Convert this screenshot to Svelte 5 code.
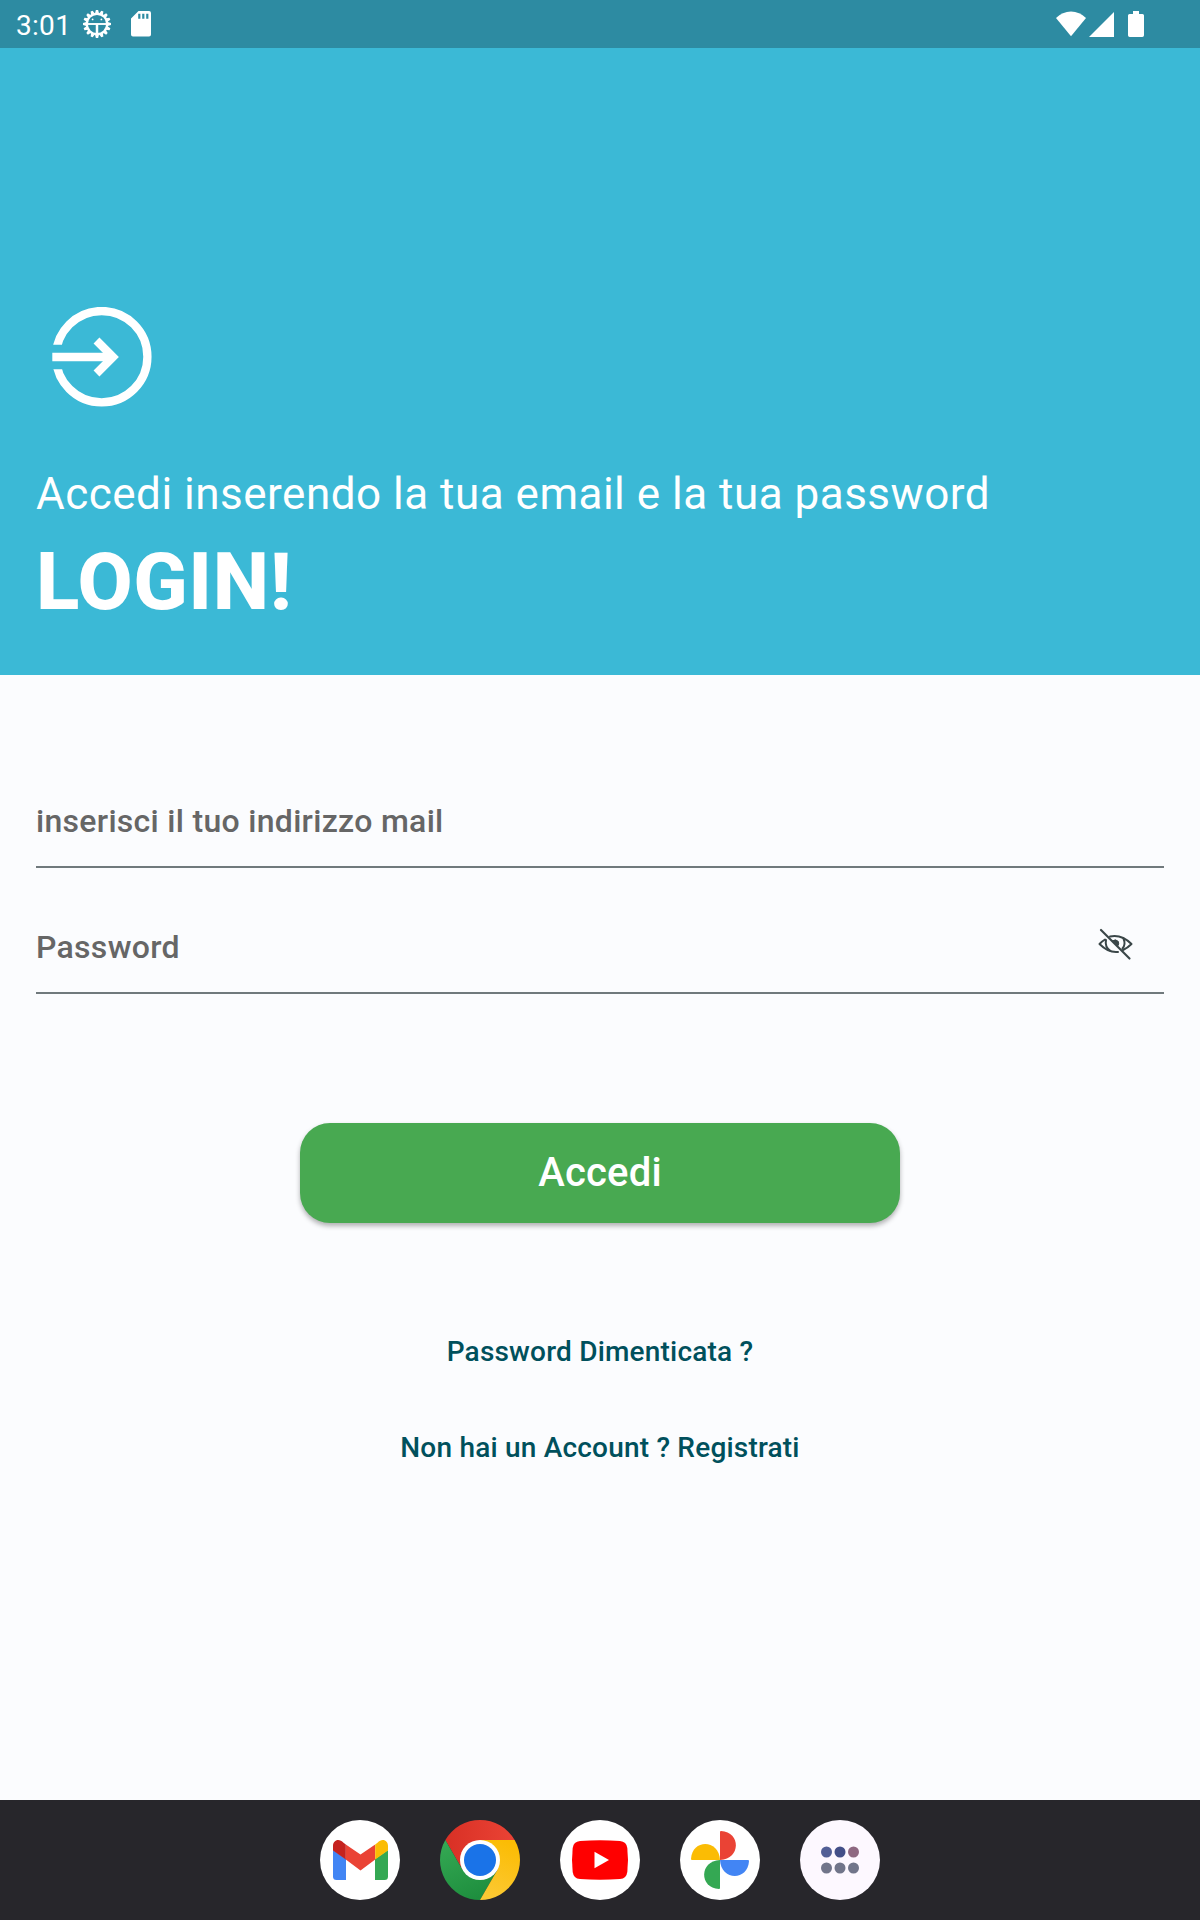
<script>
  const teeth = Array.from({ length: 16 }, (_, i) => i * 22.5);
  const dots = [
    [-13.5, -8, '#525f96'], [0, -8, '#434f88'], [13.5, -8, '#8e6881'],
    [-13.5, 8, '#71758a'], [0, 8, '#71758a'], [13.5, 8, '#71758a']
  ];
</script>

<div class="screen">
  <div class="status">
    <span class="time">3:01</span>
    <svg class="gear" width="28" height="28" viewBox="-14 -14 28 28">
      {#each teeth as a}
        <path d="M-2 -10.500L-1.100 -14H1.100L2 -10.500Z" fill="#fff" transform="rotate({a})" />
      {/each}
      <circle r="10.200" fill="none" stroke="#fff" stroke-width="2.200" />
      <path d="M-9.500 0H9.500" stroke="#fff" stroke-width="1.900" />
      <path d="M0 0V10" stroke="#fff" stroke-width="2.500" />
      <circle cx="-4.400" cy="-4.600" r=".9" fill="#fff" />
      <circle cx="4.400" cy="-4.600" r=".9" fill="#fff" />
    </svg>
    <svg class="sd" width="20" height="26" viewBox="0 0 20 26">
      <path fill="#fff" fill-rule="evenodd" d="M7.500 0H18Q20 0 20 2V23.500Q20 25.500 18 25.500H2Q0 25.500 0 23.500V7.500ZM7.200 2.700V7.700H9.400V2.700ZM11.200 2.700V7.700H13.400V2.700ZM15.200 2.700V7.700H17.400V2.700Z" />
    </svg>
    <span class="grow"></span>
    <svg width="30" height="26" viewBox="0 0 30 26"><path fill="#fff" d="M15 25.300L0 7Q6.500 .5 15 .5T30 7Z" /></svg>
    <svg class="signal" width="25" height="25" viewBox="0 0 25 25"><path fill="#fff" d="M0 25H25V0Z" /></svg>
    <svg class="battery" width="16" height="26" viewBox="0 0 16 26"><path fill="#fff" d="M5 0H11V3H14.500Q16 3 16 4.500V24.300Q16 26 14.300 26H1.700Q0 26 0 24.300V4.500Q0 3 1.500 3H5Z" /></svg>
  </div>

  <header>
    <svg class="enter" width="100" height="100" viewBox="0 0 100 100" fill="none" stroke="#fff" stroke-width="8.300">
      <clipPath id="gap"><path d="M0 0H100V100H0V62.300H30V37.700H0Z" /></clipPath>
      <circle cx="49.700" cy="49.700" r="45.700" clip-path="url(#gap)" />
      <path d="M.3 50H60" />
      <path d="M44.500 33.500L61 50L44.500 66.500" />
    </svg>
    <p>Accedi inserendo la tua email e la tua password</p>
    <h1>LOGIN!</h1>
  </header>

  <main>
    <div class="field"><span>inserisci il tuo indirizzo mail</span></div>
    <div class="field">
      <span>Password</span>
      <svg width="36" height="34" viewBox="0 0 36 34" fill="none" stroke="#3a4648" stroke-width="2" stroke-linecap="round" stroke-linejoin="round">
        <path d="M3 2L31.500 30.500" stroke-width="2.200" />
        <path d="M7 11.500Q4 13.300 1.500 16Q9.500 24 18 24H20" />
        <path d="M12 8.500Q23.500 6 33.500 16Q29.500 20 25 22" />
        <path d="M8 12Q6.500 19 12.500 23M25.500 10.500Q28 16.500 24.500 20.500" />
        <path d="M14.500 12.800Q18 10.500 20.300 13.500Q21.500 16 19.800 18Z" fill="#3a4648" stroke-width="1" />
      </svg>
    </div>
    <button>Accedi</button>
    <a class="forgot" href="#forgot">Password Dimenticata ?</a>
    <a class="register" href="#register">Non hai un Account ? Registrati</a>
  </main>

  <nav>
    <svg width="80" height="80" viewBox="-40 -40 80 80">
      <circle r="40" fill="#fff" />
      <path d="M-27 -10L-14 -1V20H-23.500Q-27 20 -27 16.500Z" fill="#4285f4" />
      <path d="M28 -10L15 -1V20H24.500Q28 20 28 16.500Z" fill="#34a853" />
      <path d="M-14.200 -15.500L.5 -5.500L15.200 -15.500V-.5L.5 10.500L-14.200 -.5Z" fill="#ea4335" />
      <path d="M-14.200 -15.500V-.5L-27 -9.500V-14C-27 -20 -21 -22.500 -16.500 -17.300Z" fill="#c5221f" />
      <path d="M15.200 -15.500V-.5L28 -9.500V-14C28 -20 22 -22.500 17.500 -17.300Z" fill="#fbbc04" />
    </svg>
    <svg width="80" height="80" viewBox="-40 -40 80 80">
      <defs>
        <linearGradient id="cr" x1="0" x2="1"><stop stop-color="#d93025" /><stop offset="1" stop-color="#ea4335" /></linearGradient>
        <linearGradient id="cg" x1=".6" y1="1" x2=".2" y2="0"><stop stop-color="#1e8e3e" /><stop offset="1" stop-color="#34a853" /></linearGradient>
        <linearGradient id="cy" x1=".3" y1="1" x2=".6" y2="0"><stop stop-color="#fcc934" /><stop offset="1" stop-color="#fbbc04" /></linearGradient>
      </defs>
      <path d="M-34.640 -20A40 40 0 0 1 34.640 -20H0L-17.320 10Z" fill="url(#cr)" />
      <path d="M-34.640 -20A40 40 0 0 0 0 40L17.320 10H-17.320Z" fill="url(#cg)" />
      <path d="M34.640 -20A40 40 0 0 1 0 40L17.320 10L0 -20Z" fill="url(#cy)" />
      <circle r="20" fill="#fff" /><circle r="16" fill="#1a73e8" />
    </svg>
    <svg width="80" height="80" viewBox="-40 -40 80 80">
      <circle r="40" fill="#fff" />
      <path d="M-20 -19Q0 -20.500 20 -19Q26.500 -18.500 27.300 -12Q28.700 0 27.300 12Q26.500 18.500 20 19Q0 20.500 -20 19Q-26.500 18.500 -27.300 12Q-28.700 0 -27.300 -12Q-26.500 -18.500 -20 -19Z" fill="#f00" />
      <path d="M-5.500 -8.300L9 0L-5.500 8.300Z" fill="#fff" />
    </svg>
    <svg width="80" height="80" viewBox="-40 -40 80 80">
      <circle r="40" fill="#fff" />
      <path d="M0 0V-28Q0 -29 1 -29C21 -28 21 -1 0 0Z" fill="#ea4335" />
      <path d="M0 0H28Q29 0 29 1C28 21 1 21 0 0Z" fill="#4285f4" />
      <path d="M0 0V28Q0 29 -1 29C-21 28 -21 1 0 0Z" fill="#34a853" />
      <path d="M0 0H-28Q-29 0 -29 -1C-28 -21 -1 -21 0 0Z" fill="#fbbc04" />
    </svg>
    <svg width="80" height="80" viewBox="-40 -40 80 80">
      <circle r="40" fill="#fdf8ff" />
      {#each dots as [x, y, color]}
        <circle cx={x} cy={y} r="5.500" fill={color} />
      {/each}
    </svg>
  </nav>
</div>

<style>
  :global(body) { margin: 0; }
  .screen {
    width: 1200px; height: 1920px; display: flex; flex-direction: column;
    background: #fbfcfe; font-family: Roboto, sans-serif;
  }
  svg { display: block; flex: none; }
  .status {
    height: 48px; box-sizing: border-box; background: #2d8ba2; color: #fff;
    display: flex; align-items: flex-start; padding: 11px 56px 0 16px;
  }
  .time { width: 67px; font-size: 28px; line-height: 29px; letter-spacing: .3px; }
  .gear { margin: -1px 20px 0 0; }
  .grow { flex: 1; }
  .signal { margin: 1px 14px 0 3px; }
  header {
    height: 627px; box-sizing: border-box; padding: 259px 36px 0;
    background: #3bb9d6; color: #fff;
  }
  .enter { margin-left: 16px; }
  p { margin: 60px 0 0; font-size: 44px; line-height: 54px; letter-spacing: .5px; white-space: nowrap; }
  h1 { margin: 14px 0 0; font-size: 80px; line-height: 94px; font-weight: 800; letter-spacing: .6px; }
  main {
    flex: 1; display: flex; flex-direction: column; align-items: center; padding: 67px 36px 0;
  }
  .field {
    width: 100%; height: 126px; box-sizing: border-box; border-bottom: 2px solid #70797c;
    display: flex; justify-content: space-between; align-items: flex-start; padding-top: 59px;
  }
  .field span { font-size: 32px; line-height: 40px; font-weight: 500; letter-spacing: .3px; color: #666; }
  .field svg { margin: 1px 30px 0 0; }
  button {
    width: 600px; height: 100px; margin-top: 129px; padding: 0 0 1px; border: 0; border-radius: 30px;
    background: #48a951; color: #fff; font: 500 40px/50px Roboto, sans-serif; letter-spacing: .2px;
    box-shadow: 0 3px 5px rgba(0, 0, 0, .3);
  }
  a { font-size: 28px; line-height: 32px; font-weight: 500; letter-spacing: .2px; color: #00505c; text-decoration: none; }
  .forgot { margin-top: 113px; }
  .register { margin-top: 64px; }
  nav {
    height: 120px; flex: none; background: #27262b; display: flex;
    justify-content: center; align-items: center; gap: 40px;
  }
</style>
